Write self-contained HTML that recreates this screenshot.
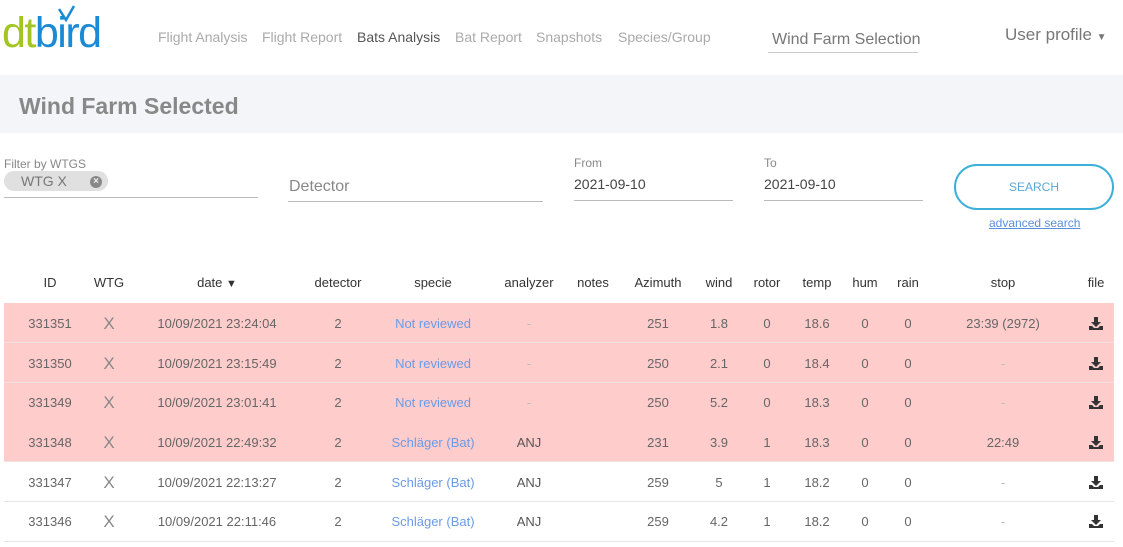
<!DOCTYPE html><html><head><style>
body{margin:0;width:1123px;height:547px;background:#fff;font-family:"Liberation Sans",sans-serif;position:relative;overflow:hidden}
.a{position:absolute;white-space:nowrap}
.c{position:absolute;width:120px;text-align:center;font-size:13px;color:#666;white-space:nowrap}
.nav{font-size:14px;color:#aaa;top:29px}
.row{position:absolute;left:4px;width:1110px;height:39px;border-bottom:1px solid #e6e6e6}
.pink{background:#ffcccc;border-bottom:1px solid #f5dede}
.lbl{font-size:12px;color:#888}
.val{font-size:14px;color:#444}
.line{position:absolute;height:1px;background:#bbb}
.b{color:#6a9be6}
.x{font-size:17px;color:#888}
</style></head><body>
<div class="a" style="left:2px;top:9px;font-size:43px;letter-spacing:-1.5px"><span style="color:#a3c521">dt</span><span style="color:#1a8ad4">bird</span></div>
<svg class="a" style="left:57px;top:5px" width="20" height="18"><path d="M2 4 L9 15 L17 1" stroke="#1a8ad4" stroke-width="2.5" fill="none"/></svg>
<div class="a nav" style="left:158px">Flight Analysis</div>
<div class="a nav" style="left:262px">Flight Report</div>
<div class="a nav" style="left:357px;color:#555">Bats Analysis</div>
<div class="a nav" style="left:455px">Bat Report</div>
<div class="a nav" style="left:536px">Snapshots</div>
<div class="a nav" style="left:618px">Species/Group</div>
<div class="a" style="left:772px;top:31px;font-size:16px;color:#777">Wind Farm Selection</div>
<div class="line" style="left:768px;top:52px;width:150px;background:#ccc"></div>
<div class="a" style="left:1005px;top:25px;font-size:17px;color:#777">User profile <span style="font-size:10px">▼</span></div>
<div class="a" style="left:0;top:75px;width:1123px;height:58px;background:#f4f5f8"></div>
<div class="a" style="left:19px;top:93px;font-size:23px;font-weight:bold;color:#888">Wind Farm Selected</div>
<div class="a lbl" style="left:4px;top:157px">Filter by WTGS</div>
<div class="a" style="left:4px;top:171px;width:104px;height:20px;background:#e0e0e0;border-radius:10px"></div>
<div class="a" style="left:21px;top:173px;font-size:14px;color:#777">WTG X</div>
<div class="a" style="left:90px;top:176px;width:12px;height:12px;border-radius:6px;background:#888;color:#eee;font-size:10px;text-align:center;line-height:12px;font-weight:bold">×</div>
<div class="line" style="left:4px;top:197px;width:254px"></div>
<div class="a" style="left:289px;top:178px;font-size:16px;color:#888">Detector</div>
<div class="line" style="left:288px;top:201px;width:255px"></div>
<div class="a lbl" style="left:574px;top:156px">From</div>
<div class="a val" style="left:574px;top:176px">2021-09-10</div>
<div class="line" style="left:574px;top:200px;width:159px"></div>
<div class="a lbl" style="left:764px;top:156px">To</div>
<div class="a val" style="left:764px;top:176px">2021-09-10</div>
<div class="line" style="left:764px;top:200px;width:159px"></div>
<div class="a" style="left:954px;top:164px;width:156px;height:42px;border:2px solid #3cb0d8;border-radius:23px;text-align:center;line-height:42px;font-size:12px;color:#5aa8d8">SEARCH</div>
<div class="a" style="left:989px;top:216px;font-size:12px;color:#5a8fe0;text-decoration:underline">advanced search</div>
<div class="row pink" style="top:303px"></div>
<div class="row pink" style="top:343px"></div>
<div class="row pink" style="top:383px"></div>
<div class="row pink" style="top:422px"></div>
<div class="row" style="top:462px"></div>
<div class="row" style="top:502px"></div>
<div id="t"></div>
<script>
var cx=[50,109,217,338,433,529,593,658,719,767,817,865,908,1003,1096];
var h=["ID","WTG","date <span style='font-size:11px'>▼</span>","detector","specie","analyzer","notes","Azimuth","wind","rotor","temp","hum","rain","stop","file"];
var rows=[
["331351","X","10/09/2021 23:24:04","2","Not reviewed","-","","251","1.8","0","18.6","0","0","23:39 (2972)"],
["331350","X","10/09/2021 23:15:49","2","Not reviewed","-","","250","2.1","0","18.4","0","0","-"],
["331349","X","10/09/2021 23:01:41","2","Not reviewed","-","","250","5.2","0","18.3","0","0","-"],
["331348","X","10/09/2021 22:49:32","2","Schläger (Bat)","ANJ","","231","3.9","1","18.3","0","0","22:49"],
["331347","X","10/09/2021 22:13:27","2","Schläger (Bat)","ANJ","","259","5","1","18.2","0","0","-"],
["331346","X","10/09/2021 22:11:46","2","Schläger (Bat)","ANJ","","259","4.2","1","18.2","0","0","-"]];
var ys=[316,356,395,435,475,514];
var s="";
h.forEach(function(t,i){s+='<div class="c" style="left:'+(cx[i]-60)+'px;top:275px;color:#333">'+t+'</div>';});
rows.forEach(function(r,j){r.forEach(function(t,i){
var cl="c"+(i==1?" x":"")+(i==4?" b":"");
var st=(i==5&&t=="-")||(i==13&&t=="-")?"color:#bbb;":"";
if(i==5&&t=="ANJ")st="color:#555;";
s+='<div class="'+cl+'" style="'+st+'left:'+(cx[i]-60)+'px;top:'+(ys[j]-(i==1?2:0))+'px">'+t+'</div>';});
s+='<svg class="a" style="left:1089px;top:'+(ys[j]+1)+'px" width="14" height="13"><path d="M5 0h4v5h3l-5 5-5-5h3z M0 9h3l2 2h4l2-2h3v4H0z" fill="#333"/></svg>';});
document.getElementById("t").innerHTML=s;
</script>
</body></html>
